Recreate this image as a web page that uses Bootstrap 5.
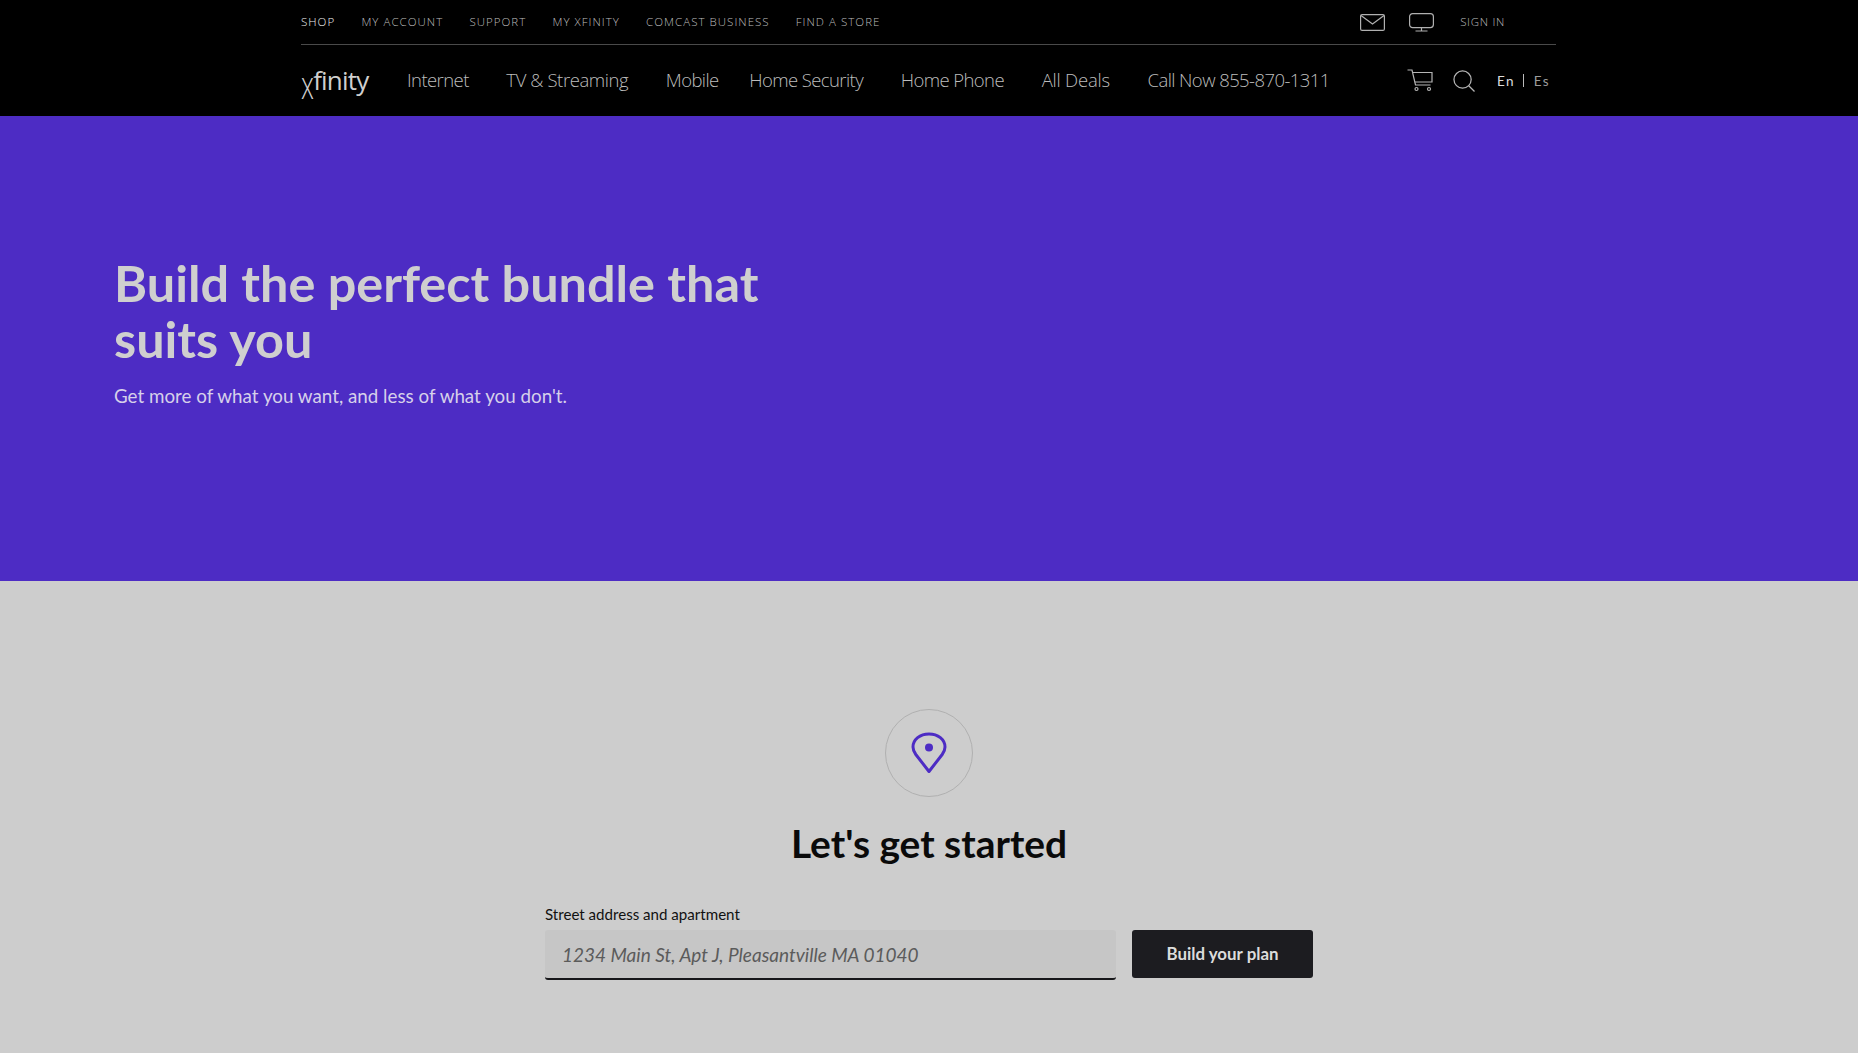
<!DOCTYPE html>
<html lang="en">
<head>
    <meta charset="UTF-8">
    <meta name="viewport" content="width=device-width, initial-scale=1.0">
    <title>Xfinity</title>
    <link href="https://cdn.jsdelivr.net/npm/bootstrap@5.3.1/dist/css/bootstrap.min.css" rel="stylesheet">
    <style>
        body {
            background-color: #cdcdcd;
            font-family: "Lato", "Liberation Sans", sans-serif;
            overflow: hidden;
        }
        .site-header {
            background: #000;
            height: 116px;
        }
        .header-inner {
            width: 1255px;
            margin-left: 301px;
        }
        .top-bar {
            height: 45px;
            border-bottom: 1px solid #4a4a4a;
            font-family: "Open Sans", sans-serif;
            font-size: 11.5px;
            font-weight: 300;
            letter-spacing: 1.03px;
            padding-right: 51px;
        }
        .top-bar a {
            color: #bdbdbd;
            text-decoration: none;
            text-transform: uppercase;
            margin-right: 26.2px;
        }
        .top-bar a.is-active {
            color: #f0f0f0;
        }
        .top-bar svg {
            color: #b0b0b0;
            margin-right: 24px;
        }
        .top-bar a.sign-in {
            margin: 0 0 0 2px;
            letter-spacing: .7px;
        }
        .main-bar {
            height: 71px;
        }
        .brand-logo {
            font-family: "Open Sans", sans-serif;
            font-size: 26px;
            font-weight: 400;
            letter-spacing: -.8px;
            color: #cfcfcf;
            text-decoration: none;
            width: 106px;
            margin-top: -1px;
        }
        .brand-logo span {
            display: inline-block;
            font-weight: 300;
            transform: scaleY(1.5);
            transform-origin: 50% 30%;
        }
        .main-link {
            font-family: "Open Sans", sans-serif;
            font-size: 18.5px;
            font-weight: 300;
            letter-spacing: -.58px;
            color: #bdbdbd;
            text-decoration: none;
            margin-right: 37.6px;
            margin-top: -2px;
        }
        .main-link.tight {
            margin-right: 30.5px;
        }
        .main-link.tv-link {
            letter-spacing: -.42px;
        }
        .main-link.deals-link {
            letter-spacing: -.2px;
        }
        .bar-icons {
            gap: 20px;
        }
        .bar-icons svg {
            color: #b5b5b5;
        }
        .lang-switch {
            font-size: 13.5px;
            letter-spacing: 1.3px;
            color: #9c9c9c;
            margin-left: 22px;
            padding-right: 6px;
            margin-top: 1px;
        }
        .lang-switch b {
            font-weight: 400;
            color: #dcdcdc;
        }
        .lang-switch i {
            display: inline-block;
            width: 1px;
            height: 13px;
            background: #bbb;
            margin: 0 10px 0 8px;
            vertical-align: -1px;
        }
        .hero-band {
            background: #4d2cc4;
            height: 465px;
            padding: 139px 0 0 114px;
        }
        .hero-band h1 {
            color: #cfcfcf;
            font-size: 50.4px;
            font-weight: 700;
            line-height: 56px;
            margin-bottom: 15px;
            width: 700px;
        }
        .hero-band p {
            color: #d6d0ea;
            font-size: 18.8px;
            margin: 0;
        }
        .start-section {
            padding-top: 128px;
        }
        .pin-ring {
            width: 88px;
            height: 88px;
            border: 1px solid #b0b0b0;
            border-radius: 50%;
        }
        .start-section h2 {
            font-size: 38.9px;
            font-weight: 700;
            color: #0a0a0a;
            margin: 24px 0 0;
            line-height: 44px;
        }
        .address-form {
            width: 768px;
            margin-top: 41px;
        }
        .address-form label {
            font-size: 15.1px;
            color: #111;
            margin-bottom: 7px;
            line-height: 17px;
            display: block;
        }
        .address-form .form-control {
            width: 571px;
            height: 50px;
            background: #c6c6c6;
            border: 0;
            border-bottom: 2px solid #17171a;
            border-radius: 3px;
            padding-left: 17px;
            font-size: 19px;
            box-shadow: none;
        }
        .address-form .form-control::placeholder {
            color: #5b5b5b;
            font-style: italic;
        }
        .plan-btn {
            width: 181px;
            height: 48px;
            background: #1c1c20;
            color: #dcdcdc;
            border: 0;
            border-radius: 3px;
            font-weight: 700;
            font-size: 16.9px;
        }
    </style>
</head>
<body>
    <!-- Header -->
    <header class="site-header">
        <div class="header-inner">
            <div class="top-bar d-flex align-items-center">
                <a class="is-active" href="#">Shop</a>
                <a href="#">My Account</a>
                <a href="#">Support</a>
                <a href="#">My Xfinity</a>
                <a href="#">Comcast Business</a>
                <a href="#">Find a Store</a>
                <div class="ms-auto d-flex align-items-center">
                    <svg width="25" height="17" viewBox="0 0 25 17" fill="none" stroke="currentColor" stroke-width="1.2"><rect x=".6" y=".6" width="23.8" height="15.8" rx="1.5"/><path d="M1 1.5l11.500 8.500L24 1.500"/></svg>
                    <svg width="25" height="19" viewBox="0 0 25 19" fill="none" stroke="currentColor" stroke-width="1.2"><rect x=".6" y=".6" width="23.800" height="14" rx="3"/><path d="M12.500 14.600v3.400M6.500 18h12"/></svg>
                    <a class="sign-in" href="#">Sign in</a>
                </div>
            </div>
            <nav class="main-bar d-flex align-items-center">
                <a class="brand-logo" href="#"><span>x</span>finity</a>
                <a class="main-link" href="#">Internet</a>
                <a class="main-link tv-link" href="#">TV &amp; Streaming</a>
                <a class="main-link tight" href="#">Mobile</a>
                <a class="main-link" href="#">Home Security</a>
                <a class="main-link" href="#">Home Phone</a>
                <a class="main-link deals-link" href="#">All Deals</a>
                <a class="main-link" href="#">Call Now 855-870-1311</a>
                <div class="bar-icons ms-auto d-flex align-items-center">
                    <svg width="26" height="23" viewBox="0 0 26 23" fill="none" stroke="currentColor" stroke-width="1.2"><path d="M.5 1h4.500l3.500 15h15"/><path d="M5.500 3.500h19.500v9.500H7.700"/><circle cx="9.500" cy="20" r="1.500"/><circle cx="22" cy="20" r="1.500"/></svg>
                    <svg width="22" height="22" viewBox="0 0 23 23" fill="none" stroke="currentColor" stroke-width="1.300"><circle cx="10" cy="10" r="9"/><path d="M16.500 16.500l6 6"/></svg>
                </div>
                <div class="lang-switch"><b>En</b><i></i>Es</div>
            </nav>
        </div>
    </header>

    <!-- Hero -->
    <section class="hero-band">
        <h1>Build the perfect bundle that suits you</h1>
        <p>Get more of what you want, and less of what you don't.</p>
    </section>

    <!-- Address check -->
    <section class="start-section d-flex flex-column align-items-center">
        <div class="pin-ring d-flex align-items-center justify-content-center">
            <svg width="36" height="42" viewBox="0 0 36 42" fill="none"><path d="M18 39.500L4.800 22.500C2.800 19.800 2 17.500 2 15C2 7.500 9 2 18 2s16 5.500 16 13c0 2.500-.800 4.800-2.800 7.500z" stroke="#4d2cc4" stroke-width="3" stroke-linejoin="round"/><circle cx="18" cy="15.500" r="4" fill="#4d2cc4"/></svg>
        </div>
        <h2>Let's get started</h2>
        <form class="address-form">
            <label for="addressInput">Street address and apartment</label>
            <div class="d-flex align-items-start justify-content-between">
                <input class="form-control" id="addressInput" type="text" placeholder="1234 Main St, Apt J, Pleasantville MA 01040">
                <button class="btn plan-btn" type="button">Build your plan</button>
            </div>
        </form>
    </section>

    <script src="https://cdn.jsdelivr.net/npm/bootstrap@5.3.1/dist/js/bootstrap.bundle.min.js"></script>
</body>
</html>
